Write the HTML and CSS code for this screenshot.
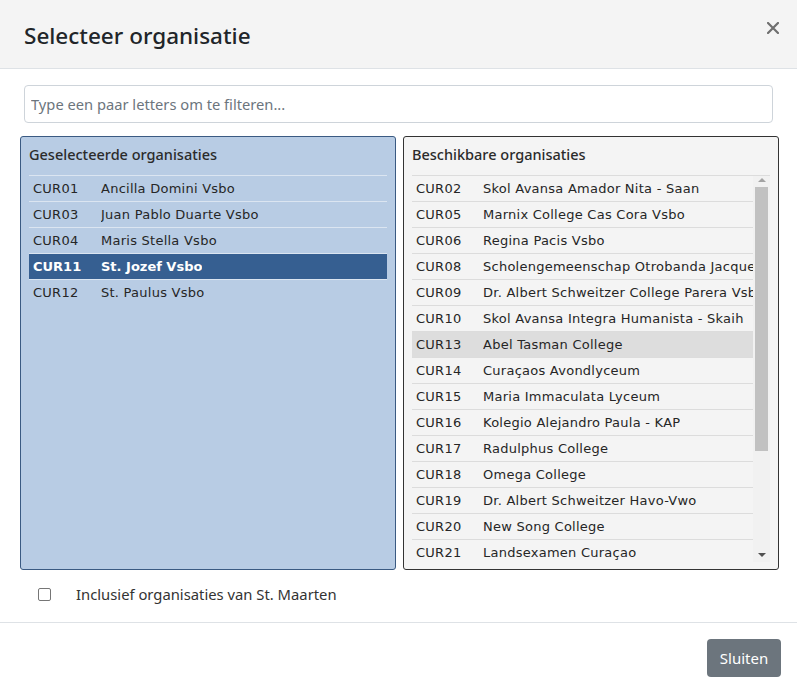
FILE: index.html
```html
<!DOCTYPE html>
<html lang="nl">
<head>
<meta charset="utf-8">
<title>Selecteer organisatie</title>
<link rel="stylesheet" href="styles.css">
</head>
<body>
<div class="modal">
  <div class="modal-header">
    <h1 class="modal-title">Selecteer organisatie</h1>
    <button class="close" type="button" aria-label="Sluiten">
      <svg width="12" height="12" viewBox="0 0 12 12"><path d="M1 1 L11 11 M11 1 L1 11" stroke="#6f6f6f" stroke-width="2.2" stroke-linecap="square"/></svg>
    </button>
  </div>
  <div class="modal-body">
    <input class="filter" type="text" placeholder="Type een paar letters om te filteren...">
    <div class="panels">
      <div class="panel panel-selected">
        <div class="panel-title">Geselecteerde organisaties</div>
        <div class="list">
          <div class="rows">
            <div class="row"><span class="code">CUR01</span><span class="name">Ancilla Domini Vsbo</span></div>
            <div class="row"><span class="code">CUR03</span><span class="name">Juan Pablo Duarte Vsbo</span></div>
            <div class="row"><span class="code">CUR04</span><span class="name">Maris Stella Vsbo</span></div>
            <div class="row active"><span class="code">CUR11</span><span class="name">St. Jozef Vsbo</span></div>
            <div class="row last"><span class="code">CUR12</span><span class="name">St. Paulus Vsbo</span></div>
          </div>
        </div>
      </div>
      <div class="panel panel-available">
        <div class="panel-title">Beschikbare organisaties</div>
        <div class="list scroll-list">
          <div class="rows">
            <div class="row"><span class="code">CUR02</span><span class="name">Skol Avansa Amador Nita - Saan</span></div>
            <div class="row"><span class="code">CUR05</span><span class="name">Marnix College Cas Cora Vsbo</span></div>
            <div class="row"><span class="code">CUR06</span><span class="name">Regina Pacis Vsbo</span></div>
            <div class="row"><span class="code">CUR08</span><span class="name">Scholengemeenschap Otrobanda Jacques</span></div>
            <div class="row"><span class="code">CUR09</span><span class="name">Dr. Albert Schweitzer College Parera Vsbo</span></div>
            <div class="row"><span class="code">CUR10</span><span class="name">Skol Avansa Integra Humanista - Skaih</span></div>
            <div class="row hover"><span class="code">CUR13</span><span class="name">Abel Tasman College</span></div>
            <div class="row"><span class="code">CUR14</span><span class="name">Curaçaos Avondlyceum</span></div>
            <div class="row"><span class="code">CUR15</span><span class="name">Maria Immaculata Lyceum</span></div>
            <div class="row"><span class="code">CUR16</span><span class="name">Kolegio Alejandro Paula - KAP</span></div>
            <div class="row"><span class="code">CUR17</span><span class="name">Radulphus College</span></div>
            <div class="row"><span class="code">CUR18</span><span class="name">Omega College</span></div>
            <div class="row"><span class="code">CUR19</span><span class="name">Dr. Albert Schweitzer Havo-Vwo</span></div>
            <div class="row"><span class="code">CUR20</span><span class="name">New Song College</span></div>
            <div class="row"><span class="code">CUR21</span><span class="name">Landsexamen Curaçao</span></div>
          </div>
          <div class="scrollbar">
            <div class="arrow up"></div>
            <div class="track"><div class="thumb"></div></div>
            <div class="arrow down"></div>
          </div>
        </div>
      </div>
    </div>
    <label class="check">
      <span class="box"></span>
      <span class="check-label">Inclusief organisaties van St. Maarten</span>
    </label>
  </div>
  <div class="modal-footer">
    <button class="btn" type="button">Sluiten</button>
  </div>
</div>
</body>
</html>
```
FILE: styles.css
```css
html, body {
  margin: 0;
  padding: 0;
  background: #ffffff;
}
body {
  font-family: "Segoe UI", "Noto Sans", "Open Sans", sans-serif;
  color: #212529;
}
.modal {
  width: 797px;
  height: 692px;
  display: flex;
  flex-direction: column;
  background: #fff;
}
.modal-header {
  height: 68px;
  background: #f4f4f4;
  border-bottom: 1px solid #dee2e6;
  display: flex;
  align-items: center;
  justify-content: space-between;
  padding: 0 18px 0 24px;
  box-sizing: content-box;
}
.modal-title {
  margin: 0;
  font-size: 22.5px;
  font-weight: 500;
  color: #212529;
  position: relative;
  top: 1px;
}
.close {
  border: 0;
  background: transparent;
  padding: 0;
  width: 12px;
  height: 12px;
  align-self: flex-start;
  margin-top: 22px;
  cursor: pointer;
}
.close svg { display: block; }
.modal-body {
  padding: 16px 24px 0 24px;
  display: flex;
  flex-direction: column;
}
.filter {
  box-sizing: border-box;
  width: 749px;
  height: 38px;
  border: 1px solid #ced4da;
  border-radius: 4px;
  padding: 0 6px;
  font-family: "Segoe UI", "Noto Sans", "Open Sans", sans-serif;
  font-size: 14.7px;
  color: #495057;
  outline: none;
}
.filter::placeholder { color: #6c757d; }
.panels {
  display: flex;
  gap: 7px;
  margin: 13px 0 0 -4px;
  width: 759px;
}
.panel {
  box-sizing: border-box;
  width: 376px;
  height: 434px;
  border-radius: 3px;
  padding: 6px 8px 0 8px;
  display: flex;
  flex-direction: column;
}
.panel-selected {
  background: #b8cce4;
  border: 1px solid #3a5a82;
}
.panel-available {
  background: #f4f4f4;
  border: 1px solid #333333;
}
.panel-title {
  font-size: 14.5px;
  font-weight: 500;
  color: #2b2b2b;
  height: 32px;
  line-height: 22px;
}
.list {
  display: flex;
  font-family: "DejaVu Sans", Verdana, sans-serif;
  font-size: 13px;
  color: #262626;
}
.panel-selected .list { border-top: 1px solid #dbe5f1; }
.panel-available .list {
  border-top: 1px solid #dcdcdc;
  height: 386px;
  overflow: hidden;
}
.rows {
  flex: 1;
  min-width: 0;
  overflow: hidden;
}
.row {
  height: 25px;
  display: flex;
  align-items: center;
  padding-left: 4px;
  white-space: nowrap;
  overflow: hidden;
  letter-spacing: 0.25px;
}
.panel-selected .row { border-bottom: 1px solid #dbe5f1; }
.panel-selected .row.last { border-bottom: 0; }
.panel-available .row { border-bottom: 1px solid #dcdcdc; }
.code {
  width: 68px;
  flex: none;
}
.panel-available .code { width: 67px; }
.name {
  overflow: hidden;
}
.row.active {
  background: #365f91;
  color: #fff;
  font-weight: bold;
  letter-spacing: 0;
}
.row.hover { background: #dddddd; }
.scrollbar {
  width: 17px;
  flex: none;
  background: #f1f1f1;
  display: flex;
  flex-direction: column;
  margin-top: -3px;
}
.arrow {
  height: 14px;
  display: flex;
  align-items: center;
  justify-content: center;
}
.arrow::before {
  content: "";
  width: 0;
  height: 0;
  border-left: 4px solid transparent;
  border-right: 4px solid transparent;
}
.arrow.up::before { border-bottom: 4px solid #a3a3a3; }
.arrow.down::before { border-top: 4px solid #505050; }
.track {
  flex: 1;
  padding: 0 2px;
}
.thumb {
  height: 264px;
  background: #c1c1c1;
}
.check {
  display: flex;
  align-items: center;
  height: 48px;
  padding-left: 14px;
}
.box {
  box-sizing: border-box;
  width: 13px;
  height: 13px;
  border: 1px solid #767676;
  border-radius: 2px;
  background: #fff;
  flex: none;
}
.check-label {
  margin-left: 25px;
  font-size: 14.8px;
  color: #333;
}
.modal-footer {
  margin-top: auto;
  border-top: 1px solid #dee2e6;
  height: 70px;
  display: flex;
  justify-content: flex-end;
  align-items: flex-start;
  padding: 16px 16px 0 0;
  box-sizing: border-box;
}
.btn {
  width: 74px;
  height: 38px;
  background: #6c757d;
  color: #fff;
  border: 0;
  border-radius: 4px;
  font-family: "Segoe UI", "Noto Sans", "Open Sans", sans-serif;
  font-size: 15px;
  padding: 0;
}
```
